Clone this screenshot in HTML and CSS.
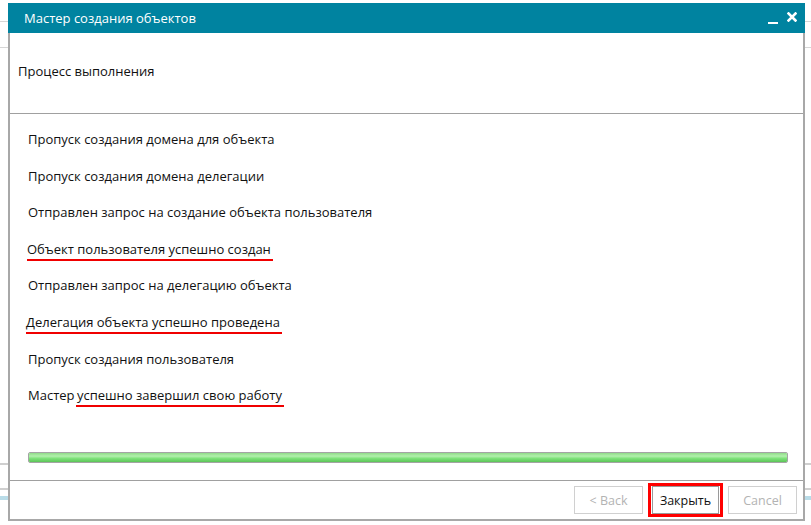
FILE: index.html
```html
<!DOCTYPE html>
<html lang="ru">
<head>
<meta charset="utf-8">
<link rel="stylesheet" href="styles.css">
</head>
<body>
<div class="window">
  <div class="titlebar">
    <span class="title">Мастер создания объектов</span>
    <span class="controls">
      <span class="minimize"></span>
      <svg class="close" width="10" height="10" viewBox="0 0 10 10"><path d="M1.5 1.5 L8.5 8.5 M8.5 1.5 L1.5 8.5" stroke="#fff" stroke-width="2.6" stroke-linecap="square"/></svg>
    </span>
  </div>
  <div class="body">
    <div class="header">Процесс выполнения</div>
    <div class="log">
      <div class="item">Пропуск создания домена для объекта</div>
      <div class="item">Пропуск создания домена делегации</div>
      <div class="item">Отправлен запрос на создание объекта пользователя</div>
      <div class="item"><span class="mark">Объект пользователя успешно создан</span></div>
      <div class="item">Отправлен запрос на делегацию объекта</div>
      <div class="item"><span class="mark mark-wide">Делегация объекта успешно проведена</span></div>
      <div class="item">Пропуск создания пользователя</div>
      <div class="item">Мастер <span class="mark mark-end">успешно завершил свою работу</span></div>
      <div class="progress"><div class="fill"></div></div>
    </div>
    <div class="footer">
      <button class="btn disabled">&lt; Back</button>
      <span class="highlight"><button class="btn primary">Закрыть</button></span>
      <button class="btn disabled">Cancel</button>
    </div>
  </div>
</div>
</body>
</html>
```
FILE: styles.css
```css
html, body {
  margin: 0;
  padding: 0;
}
body {
  width: 811px;
  height: 525px;
  overflow: hidden;
  font-family: "Open Sans", "Noto Sans", sans-serif;
  background-color: #fff;
  background-image:
    linear-gradient(#d6d6d6, #d6d6d6),
    linear-gradient(#d6d6d6, #d6d6d6),
    linear-gradient(#cfcfcf, #cfcfcf),
    linear-gradient(#cfcfcf, #cfcfcf),
    linear-gradient(#b9dce8, #b9dce8);
  background-size: 100% 1px, 100% 1px, 100% 2px, 100% 2px, 100% 4px;
  background-position: 0 21px, 0 47px, 0 463px, 0 488px, 0 496px;
  background-repeat: no-repeat;
  padding-top: 3px;
  box-sizing: border-box;
}
.window {
  margin-left: 8px;
  width: 797px;
  height: 518px;
  display: flex;
  flex-direction: column;
  background: #fff;
}
.titlebar {
  height: 30px;
  background: #0083a0;
  color: #fff;
  display: flex;
  align-items: center;
  justify-content: space-between;
  padding: 0 8px 0 16px;
  flex: none;
}
.title {
  font-size: 13px;
}
.controls {
  display: flex;
  align-items: center;
  gap: 9px;
  padding-top: 2px;
}
.minimize {
  width: 10px;
  height: 2px;
  background: #fff;
  margin-top: 8px;
}
.close {
  display: block;
  margin-top: -4px;
}
.body {
  flex: 1;
  display: flex;
  flex-direction: column;
  border: 2px solid #a8a8a8;
  border-top: none;
}
.header {
  flex: none;
  display: flex;
  align-items: center;
  padding-left: 8px;
  padding-bottom: 4px;
  font-size: 13px;
  color: #111;
  border-bottom: 1px solid #a0a0a0;
  box-sizing: border-box;
  height: 81px;
}
.log {
  flex: 1;
  padding: 15px 16px 0 18px;
  display: flex;
  flex-direction: column;
  border-bottom: 1px solid #a0a0a0;
}
.item {
  height: 36.6px;
  font-size: 13px;
  color: #111;
  line-height: 20px;
}
.mark {
  display: inline-block;
  line-height: 20px;
  border-bottom: 2px solid #f00000;
  margin-left: -1px;
  padding-right: 2px;
}
.mark-wide {
  margin-left: -2px;
  padding-left: 0;
}
.mark-end {
  margin-left: -2px;
  padding-left: 1px;
}
.progress {
  margin-top: 30px;
  height: 11px;
  border: 1px solid #a4a4a4;
  border-radius: 2px;
  box-sizing: border-box;
  overflow: hidden;
  width: 760px;
}
.fill {
  height: 100%;
  background: linear-gradient(#8fdc88 0%, #b2f0ac 35%, #7ee27a 60%, #5cc458 100%);
}
.footer {
  height: 38px;
  flex: none;
  display: flex;
  align-items: center;
  justify-content: flex-end;
  padding-right: 6px;
  gap: 5px;
}
.btn {
  font-family: "Open Sans", "Noto Sans", sans-serif;
  font-size: 12.5px;
  height: 28px;
  background: #fff;
  border: 1px solid #d0d0d0;
  padding: 0 13px;
  margin: 0;
}
.btn.disabled {
  color: #b3b3b3;
  width: 69px;
}
.highlight {
  border: 3px solid #ff0000;
  padding: 0 1px;
  display: flex;
}
.btn.primary {
  color: #111;
  border-color: #9a9a9a;
  width: 67px;
  padding: 0;
}
```
